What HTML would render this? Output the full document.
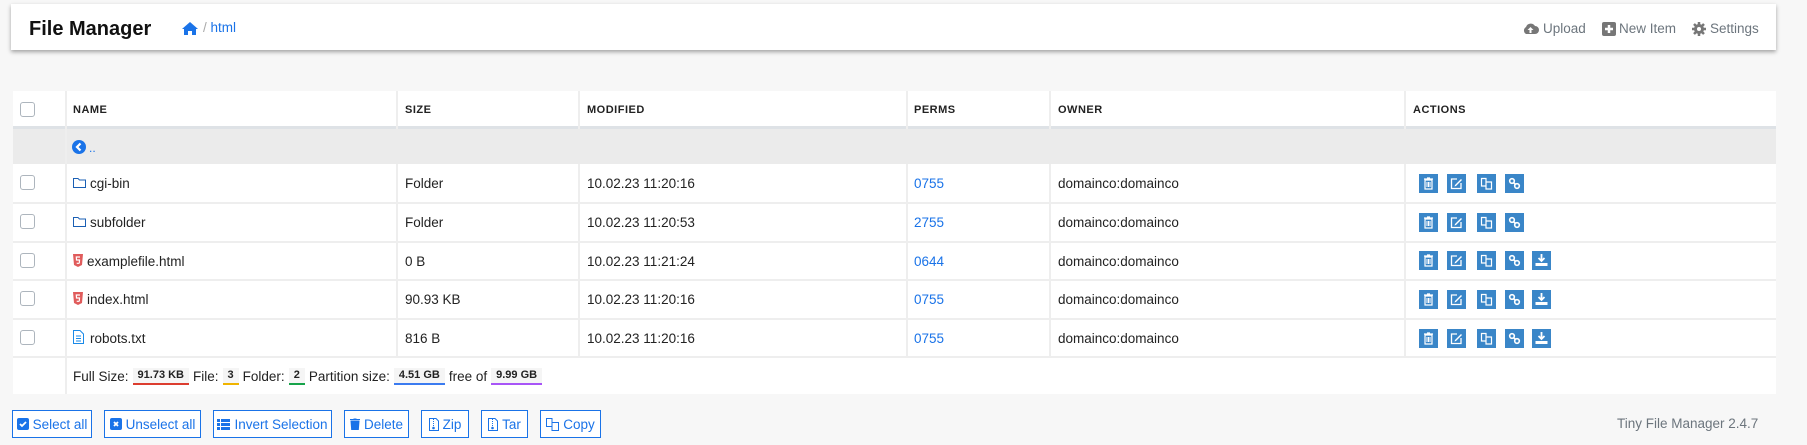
<!DOCTYPE html>
<html><head><meta charset="utf-8"><style>
*{box-sizing:border-box;margin:0;padding:0}
body{width:1807px;height:445px;background:#f7f7f7;font-family:"Liberation Sans",sans-serif;font-size:13.5px;color:#222;position:relative;overflow:hidden}
.a{position:absolute;white-space:nowrap}
.hdr{left:11px;top:4px;width:1765px;height:46px;background:#fff;box-shadow:0 2px 4px rgba(0,0,0,.35)}
.tbl{left:13px;top:91px;width:1763px;height:303px;background:#fff}
.hl{position:absolute;background:#eee}
.th{font-size:11px;font-weight:bold;letter-spacing:.5px;color:#222}
.cb{width:15px;height:15px;border:1px solid #adb5bd;border-radius:3px;background:#fff}
.btn{top:410px;height:28px;border:1px solid #1a73e8;color:#1a73e8;background:#fff;display:flex;align-items:center;justify-content:center;gap:4px;font-size:13.5px}
.bd{font-size:11px;font-weight:bold;padding:1px 5px 2px;background:#f5f5f5;border-bottom:2px solid}
.nav{color:#6c757d;font-size:13.5px}
.blue{color:#1a73e8}
</style></head><body>
<div class="a hdr"></div>
<div class="a" style="left:29px;top:18px;font-size:20px;font-weight:bold;color:#111">File Manager</div>
<svg class="a" style="left:181px;top:21px" width="18" height="15" viewBox="0 0 18 15"><path d="M9 1 L1 8 L3 8 L3 14 L7 14 L7 10 L11 10 L11 14 L15 14 L15 8 L17 8 Z" fill="#1a73e8"/></svg>
<div class="a" style="left:203px;top:20px;font-size:13.5px;color:#1a73e8"><span style="color:#aaa">/</span> html</div>
<svg class="a" style="left:1522px;top:22px" width="17" height="13" viewBox="0 0 17 13"><path d="M4 12 A4 4 0 0 1 4 5 A5 5 0 0 1 13 4 A4 4 0 0 1 13 12 Z" fill="#777"/><path d="M8.5 5 L5.5 8 L7.5 8 L7.5 11 L9.5 11 L9.5 8 L11.5 8 Z" fill="#fff"/></svg>
<div class="a nav" style="left:1543px;top:21px">Upload</div>
<svg class="a" style="left:1602px;top:22px" width="14" height="14"><rect width="14" height="14" rx="2" fill="#777"/><path d="M7 3V11M3 7H11" stroke="#fff" stroke-width="2.5"/></svg>
<div class="a nav" style="left:1619px;top:21px">New Item</div>
<svg class="a" style="left:1692px;top:22px" width="14" height="14" viewBox="0 0 14 14"><circle cx="7" cy="7" r="5" fill="#777"/><path d="M7 0V14M0 7H14M2 2L12 12M12 2L2 12" stroke="#777" stroke-width="2.5"/><circle cx="7" cy="7" r="2" fill="#fff"/></svg>
<div class="a nav" style="left:1710px;top:21px">Settings</div>

<div class="a tbl"></div>
<div class="a" style="left:13px;top:126px;width:1763px;height:3px;background:#dee2e6"></div>
<div class="a" style="left:13px;top:129px;width:1763px;height:35px;background:#ebebeb"></div>
<div class="hl" style="left:13px;top:202px;width:1763px;height:2px"></div>
<div class="hl" style="left:13px;top:241px;width:1763px;height:2px"></div>
<div class="hl" style="left:13px;top:279px;width:1763px;height:2px"></div>
<div class="hl" style="left:13px;top:318px;width:1763px;height:2px"></div>
<div class="hl" style="left:13px;top:356px;width:1763px;height:2px"></div>
<div class="hl" style="left:65px;top:91px;width:2px;height:303px"></div>
<div class="hl" style="left:396px;top:91px;width:2px;height:38px"></div><div class="hl" style="left:396px;top:164px;width:2px;height:193px"></div>
<div class="hl" style="left:578px;top:91px;width:2px;height:38px"></div><div class="hl" style="left:578px;top:164px;width:2px;height:193px"></div>
<div class="hl" style="left:906px;top:91px;width:2px;height:38px"></div><div class="hl" style="left:906px;top:164px;width:2px;height:193px"></div>
<div class="hl" style="left:1049px;top:91px;width:2px;height:38px"></div><div class="hl" style="left:1049px;top:164px;width:2px;height:193px"></div>
<div class="hl" style="left:1404px;top:91px;width:2px;height:38px"></div><div class="hl" style="left:1404px;top:164px;width:2px;height:193px"></div>

<div class="a cb" style="left:20px;top:102px"></div>
<div class="a th" style="left:73px;top:104px">NAME</div>
<div class="a th" style="left:405px;top:104px">SIZE</div>
<div class="a th" style="left:587px;top:104px">MODIFIED</div>
<div class="a th" style="left:914px;top:104px">PERMS</div>
<div class="a th" style="left:1058px;top:104px">OWNER</div>
<div class="a th" style="left:1413px;top:104px">ACTIONS</div>

<svg class="a" style="left:72px;top:140px" width="14" height="14"><circle cx="7" cy="7" r="7" fill="#1a73e8"/><path d="M8.5 3.5L5 7L8.5 10.5" stroke="#fff" stroke-width="2.2" fill="none"/></svg>
<div class="a blue" style="left:89px;top:141px;font-size:12px">..</div>

<div class="a cb" style="left:20px;top:175px"></div>
<svg class="a" style="left:73px;top:177px" width="13" height="11"><path d="M0.5 1.5H5L6.5 3H12.5V10.5H0.5Z" fill="none" stroke="#1a5fb4"/></svg>
<div class="a" style="left:90px;top:176px">cgi-bin</div>
<div class="a" style="left:405px;top:176px">Folder</div>
<div class="a" style="left:587px;top:176px">10.02.23 11:20:16</div>
<div class="a blue" style="left:914px;top:176px">0755</div>
<div class="a" style="left:1058px;top:176px">domainco:domainco</div>

<div class="a cb" style="left:20px;top:214px"></div>
<svg class="a" style="left:73px;top:216px" width="13" height="11"><path d="M0.5 1.5H5L6.5 3H12.5V10.5H0.5Z" fill="none" stroke="#1a5fb4"/></svg>
<div class="a" style="left:90px;top:215px">subfolder</div>
<div class="a" style="left:405px;top:215px">Folder</div>
<div class="a" style="left:587px;top:215px">10.02.23 11:20:53</div>
<div class="a blue" style="left:914px;top:215px">2755</div>
<div class="a" style="left:1058px;top:215px">domainco:domainco</div>

<div class="a cb" style="left:20px;top:253px"></div>
<svg class="a" style="left:73px;top:254px" width="10" height="13"><path d="M0 0H10L9 11L5 13L1 11Z" fill="#e05c5c"/><path d="M7 3H3.3L3.5 6H6.5L6.3 9L5 9.5L3.7 9" stroke="#fff" stroke-width="1.2" fill="none"/></svg>
<div class="a" style="left:87px;top:254px">examplefile.html</div>
<div class="a" style="left:405px;top:254px">0 B</div>
<div class="a" style="left:587px;top:254px">10.02.23 11:21:24</div>
<div class="a blue" style="left:914px;top:254px">0644</div>
<div class="a" style="left:1058px;top:254px">domainco:domainco</div>

<div class="a cb" style="left:20px;top:291px"></div>
<svg class="a" style="left:73px;top:292px" width="10" height="13"><path d="M0 0H10L9 11L5 13L1 11Z" fill="#e05c5c"/><path d="M7 3H3.3L3.5 6H6.5L6.3 9L5 9.5L3.7 9" stroke="#fff" stroke-width="1.2" fill="none"/></svg>
<div class="a" style="left:87px;top:292px">index.html</div>
<div class="a" style="left:405px;top:292px">90.93 KB</div>
<div class="a" style="left:587px;top:292px">10.02.23 11:20:16</div>
<div class="a blue" style="left:914px;top:292px">0755</div>
<div class="a" style="left:1058px;top:292px">domainco:domainco</div>

<div class="a cb" style="left:20px;top:330px"></div>
<svg class="a" style="left:73px;top:330px" width="11" height="14"><path d="M0.5 0.5H7L10.5 4V13.5H0.5Z" fill="none" stroke="#1a8ae8"/><path d="M3 6H8M3 8.5H8M3 11H8" stroke="#1a8ae8"/></svg>
<div class="a" style="left:90px;top:331px">robots.txt</div>
<div class="a" style="left:405px;top:331px">816 B</div>
<div class="a" style="left:587px;top:331px">10.02.23 11:20:16</div>
<div class="a blue" style="left:914px;top:331px">0755</div>
<div class="a" style="left:1058px;top:331px">domainco:domainco</div>

<svg width="0" height="0" style="position:absolute"><defs>
<g id="tr"><rect width="19" height="19" fill="#3a86c8"/><path d="M6 6H13V15H6Z M5 5H14M8 4H11" stroke="#fff" stroke-width="1.2" fill="none"/><path d="M8 8V13M9.5 8V13M11 8V13" stroke="#fff"/></g>
<g id="ed"><rect width="19" height="19" fill="#3a86c8"/><path d="M10 5H4.5V14.5H14V9" stroke="#fff" stroke-width="1.3" fill="none"/><path d="M8 11L14 5L15 6L9 12L7.5 12.5Z" fill="#fff"/></g>
<g id="cp"><rect width="19" height="19" fill="#3a86c8"/><path d="M4.5 4.5H9V12H4.5Z M9 8H14.5V15H9Z" stroke="#fff" stroke-width="1.2" fill="none"/></g>
<g id="ln"><rect width="19" height="19" fill="#3a86c8"/><circle cx="7" cy="7" r="2.3" stroke="#fff" stroke-width="1.6" fill="none"/><circle cx="12" cy="12" r="2.3" stroke="#fff" stroke-width="1.6" fill="none"/><path d="M8.5 8.5L10.5 10.5" stroke="#fff" stroke-width="1.6"/></g>
<g id="dl"><rect width="19" height="19" fill="#3a86c8"/><path d="M9.5 3V9M6.5 7L9.5 10L12.5 7" stroke="#fff" stroke-width="1.8" fill="none"/><rect x="3.5" y="12" width="12" height="3" fill="#fff"/></g>
</defs></svg>
<svg class="a" style="left:1419px;top:174px" width="140" height="19"><use href="#tr"/><use href="#ed" x="28"/><use href="#cp" x="58"/><use href="#ln" x="86"/></svg>
<svg class="a" style="left:1419px;top:213px" width="140" height="19"><use href="#tr"/><use href="#ed" x="28"/><use href="#cp" x="58"/><use href="#ln" x="86"/></svg>
<svg class="a" style="left:1419px;top:251px" width="140" height="19"><use href="#tr"/><use href="#ed" x="28"/><use href="#cp" x="58"/><use href="#ln" x="86"/><use href="#dl" x="113"/></svg>
<svg class="a" style="left:1419px;top:290px" width="140" height="19"><use href="#tr"/><use href="#ed" x="28"/><use href="#cp" x="58"/><use href="#ln" x="86"/><use href="#dl" x="113"/></svg>
<svg class="a" style="left:1419px;top:329px" width="140" height="19"><use href="#tr"/><use href="#ed" x="28"/><use href="#cp" x="58"/><use href="#ln" x="86"/><use href="#dl" x="113"/></svg>

<div class="a" style="left:73px;top:368px;font-size:13.5px;display:flex;align-items:center;gap:4px">
Full Size: <span class="bd" style="border-color:#dc3d2f">91.73 KB</span> File: <span class="bd" style="border-color:#f0b400">3</span> Folder: <span class="bd" style="border-color:#17a34a">2</span> Partition size: <span class="bd" style="border-color:#3b7bf0">4.51 GB</span> free of <span class="bd" style="border-color:#a855f7">9.99 GB</span>
</div>

<div class="a btn" style="left:12px;width:80px"><svg width="12" height="12"><rect width="12" height="12" rx="2" fill="#1a73e8"/><path d="M3 6L5 8L9 4" stroke="#fff" stroke-width="1.8" fill="none"/></svg>Select all</div>
<div class="a btn" style="left:104px;width:97px"><svg width="12" height="12"><rect width="12" height="12" rx="2" fill="#1a73e8"/><path d="M4 4L8 8M8 4L4 8" stroke="#fff" stroke-width="1.8"/></svg>Unselect all</div>
<div class="a btn" style="left:213px;width:119px"><svg width="13" height="11"><path d="M0 0H3V3H0ZM4 0H13V3H4ZM0 4H3V7H0ZM4 4H13V7H4ZM0 8H3V11H0ZM4 8H13V11H4Z" fill="#1a73e8"/></svg>Invert Selection</div>
<div class="a btn" style="left:344px;width:65px"><svg width="10" height="12"><path d="M0 1.5H10M3.5 0H6.5M1 3H9L8.3 12H1.7Z" stroke="#1a73e8" fill="#1a73e8"/></svg>Delete</div>
<div class="a btn" style="left:421px;width:48px"><svg width="10" height="13"><path d="M0.5 0.5H7L9.5 3V12.5H0.5Z" fill="none" stroke="#1a73e8"/><path d="M4.5 1V8" stroke="#1a73e8" stroke-dasharray="1 1"/><circle cx="4.5" cy="10" r="1.3" fill="#1a73e8"/></svg>Zip</div>
<div class="a btn" style="left:481px;width:47px"><svg width="10" height="13"><path d="M0.5 0.5H7L9.5 3V12.5H0.5Z" fill="none" stroke="#1a73e8"/><path d="M4.5 1V8" stroke="#1a73e8" stroke-dasharray="1 1"/><circle cx="4.5" cy="10" r="1.3" fill="#1a73e8"/></svg>Tar</div>
<div class="a btn" style="left:540px;width:61px"><svg width="13" height="13"><path d="M0.5 0.5H6V8.5H0.5Z M6 4.5H12.5V12.5H6Z" stroke="#1a73e8" fill="none"/></svg>Copy</div>

<div class="a" style="left:1617px;top:416px;font-size:13.5px;color:#6c757d">Tiny File Manager 2.4.7</div>
</body></html>
